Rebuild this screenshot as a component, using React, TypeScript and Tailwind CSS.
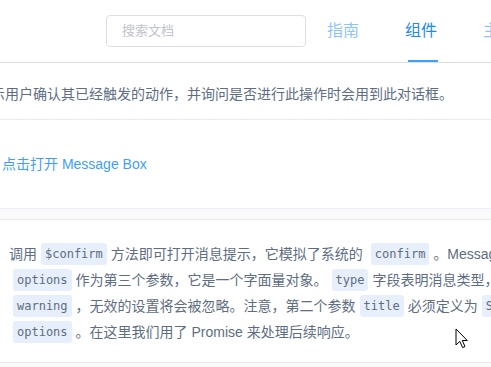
const sans = "font-['Liberation_Sans','Noto_Sans_CJK_SC',sans-serif]";

const Code = ({ children, className = "" }: { children: string; className?: string }) => (
  <code
    className={`mx-1 inline-flex h-[22px] shrink-0 items-center rounded-[3px] bg-[#e6effb] px-1 font-['DejaVu_Sans_Mono',monospace] text-[12px] text-[#5e6d82] ${className}`}
  >
    {children}
  </code>
);

const Line = ({ children }: { children: React.ReactNode }) => (
  <div className="flex h-[26px] items-center whitespace-nowrap">{children}</div>
);

const Cursor = () => (
  <svg className="absolute left-[455px] top-[328px]" width="13" height="21" viewBox="0 0 13 21">
    <path
      d="M1 1 L1 17 L4.8 13.4 L7.6 19.6 L10 18.6 L7.3 12.5 L12.3 12.5 Z"
      fill="#fff"
      stroke="#000"
      strokeWidth="1"
      strokeLinejoin="round"
    />
  </svg>
);

export default function App() {
  return (
    <div className={`relative h-[367px] w-[491px] overflow-hidden bg-white ${sans}`}>
      {/* header */}
      <header className="h-[63px] w-[1100px] border-b border-[#dcdfe6]">
        <div className="flex h-[62px] items-center pl-[106px]">
          <div className="flex h-[32px] w-[200px] items-center rounded-[4px] border border-[#dcdfe6] pl-[15px] text-[13px] text-[#c0c4cc]">
            搜索文档
          </div>
          <nav className="ml-[21px] flex h-full items-center gap-[46px] text-[16px]">
            <span className="text-[#1989fa] opacity-50">指南</span>
            <span className="relative flex h-full items-center text-[#1989fa]">
              组件
              <span className="absolute bottom-0 left-[3px] h-[2px] w-[30px] bg-[#409eff]" />
            </span>
            <span className="text-[#1989fa] opacity-50">主题</span>
          </nav>
        </div>
      </header>

      {/* content */}
      <div className="ml-[-23px] w-[1100px]">
        <p className="mb-[14px] mt-[20px] whitespace-nowrap text-[14px] leading-[22px] text-[#5e6d82]">
          提示用户确认其已经触发的动作，并询问是否进行此操作时会用到此对话框。
        </p>

        <div className="border border-[#ebebeb]">
          <div className="flex h-[88px] items-center px-[24px]">
            <button className="text-[14px] text-[#409eff]">点击打开 Message Box</button>
          </div>

          <div className="border-t border-[#eaeefb] bg-[#fafafa] pb-[10px] pt-[10px]">
            <div className="mx-[10px] border border-[#ebebeb] bg-white px-[20px] pb-[17px] pt-[21px] text-[14px] text-[#5e6d82]">
              <Line>
                <span>调用</span>
                <Code>$confirm</Code>
                <span>方法即可打开消息提示，它模拟了系统的</span>
                <Code className="ml-[8px]">confirm</Code>
                <span>。Message Box 组件也拥有极高的定制性，我们可以传入</span>
              </Line>
              <Line>
                <Code>options</Code>
                <span>作为第三个参数，它是一个字面量对象。</span>
                <Code>type</Code>
                <span>字段表明消息类型，可以为</span>
                <Code>success</Code>
                <span>，</span>
                <Code>error</Code>
                <span>，</span>
                <Code>info</Code>
                <span>和</span>
              </Line>
              <Line>
                <Code>warning</Code>
                <span>，无效的设置将会被忽略。注意，第二个参数</span>
                <Code>title</Code>
                <span>必须定义为</span>
                <Code>String</Code>
                <span>类型，如果是</span>
                <Code>Object</Code>
                <span>，会被理解为</span>
              </Line>
              <Line>
                <Code>options</Code>
                <span>。在这里我们用了 Promise 来处理后续响应。</span>
              </Line>
            </div>
          </div>
        </div>
      </div>

      <Cursor />
    </div>
  );
}
